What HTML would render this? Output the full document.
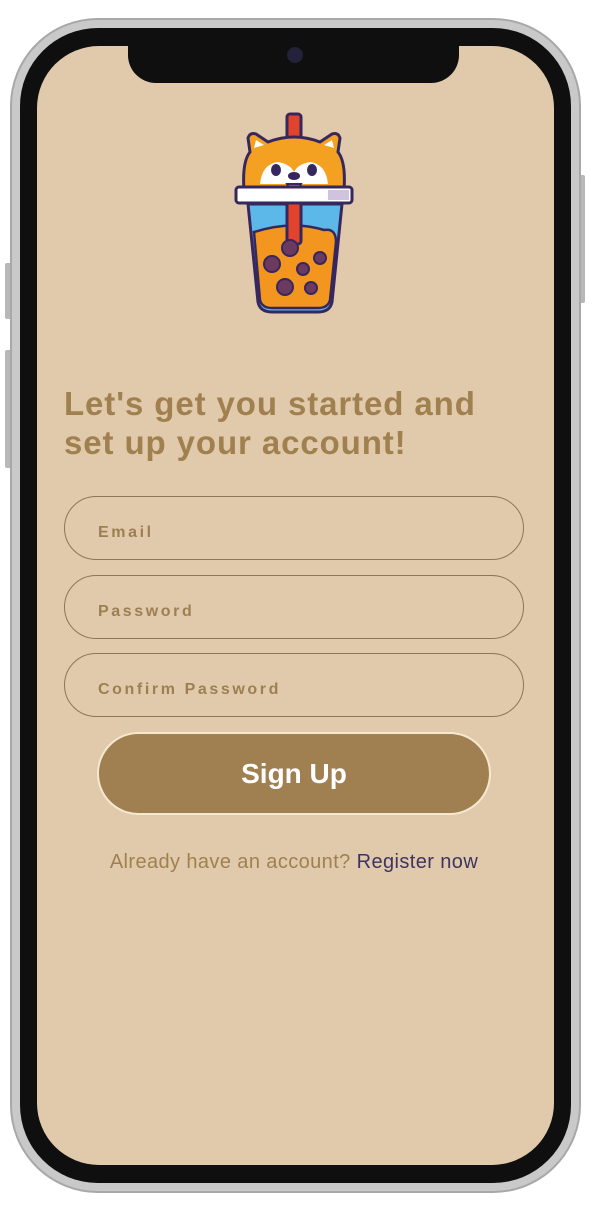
<!DOCTYPE html>
<html><head><meta charset="utf-8"><style>
*{margin:0;padding:0;box-sizing:border-box}
body{width:594px;height:1205px;background:#fff;position:relative;overflow:hidden;font-family:"Liberation Sans",sans-serif}
.btnside{position:absolute;background:#b8b8b8;border-radius:2px}
.outer{position:absolute;left:10px;top:18px;width:571px;height:1175px;border-radius:88px;background:#c9c9c9;border:2px solid #a8a8a8}
.black{position:absolute;left:20px;top:28px;width:551px;height:1155px;border-radius:78px;background:#0f0f0f}
.screen{position:absolute;left:37px;top:46px;width:517px;height:1119px;border-radius:62px;background:#e1caab;overflow:hidden}
.notch{position:absolute;left:91px;top:-2px;width:331px;height:39px;background:#0f0f0f;border-radius:0 0 28px 28px}
.cam{position:absolute;width:16px;height:16px;border-radius:50%;background:#22223a}
h1{position:absolute;left:64px;top:384px;font-size:33px;line-height:39px;color:#a0804f;font-weight:bold;letter-spacing:0.9px;white-space:nowrap}
.in{position:absolute;left:64px;width:460px;height:64px;border:1.5px solid #8c7659;border-radius:32px;font-size:16px;font-weight:bold;letter-spacing:2.6px;color:#9d7f52;padding-left:33px;padding-top:5px;line-height:61px}
.su{position:absolute;left:97px;top:732px;width:394px;height:83px;background:#a07f50;border:2px solid #f5e8cf;border-radius:42px;color:#fff;font-size:28px;font-weight:bold;text-align:center;line-height:79px}
.ft{position:absolute;left:0;width:588px;top:851px;text-align:center;font-size:20px;letter-spacing:.4px;color:#a0804f}
.ft span{color:#3d3560}
</style></head><body>
<div class="btnside" style="left:5px;top:263px;width:7px;height:56px"></div>
<div class="btnside" style="left:5px;top:350px;width:7px;height:118px"></div>
<div class="btnside" style="left:578px;top:175px;width:7px;height:128px"></div>
<div class="outer"></div>
<div class="black"></div>
<div class="screen"><div class="notch"></div></div>
<div class="cam" style="left:287px;top:47px"></div>
<svg style="position:absolute;left:232px;top:112px" width="124" height="204" viewBox="0 0 124 204">
<path d="M16 92 L26 190 Q28 200 40 200 L86 200 Q98 200 100 190 L110 92 Z" fill="#5bb8e8" stroke="#36275e" stroke-width="3"/>
<path d="M22 120 Q60 108 92 118 Q104 116 104 130 L98 188 Q96 196 86 196 L40 196 Q30 196 28 188 Z" fill="#f3961f" stroke="#36275e" stroke-width="2.5"/>
<rect x="55" y="2" width="14" height="130" rx="3" fill="#e2432c" stroke="#36275e" stroke-width="3"/>
<path d="M12 78 Q10 50 18 40 L16 26 Q18 20 24 22 L36 30 Q62 20 88 30 L100 22 Q106 20 108 26 L106 40 Q114 50 112 78 Z" fill="#f4a021" stroke="#36275e" stroke-width="3"/>
<path d="M22 36 L24 28 L32 33 Z M102 36 L100 28 L92 33 Z" fill="#fff"/>
<path d="M28 72 Q30 52 46 50 Q58 52 62 60 Q66 52 78 50 Q94 52 96 72 Z" fill="#fff"/>
<ellipse cx="44" cy="58" rx="5" ry="6" fill="#36275e"/><ellipse cx="80" cy="58" rx="5" ry="6" fill="#36275e"/>
<ellipse cx="62" cy="64" rx="6" ry="4" fill="#36275e"/>
<path d="M55 72 Q62 86 69 72 Z" fill="#e86b7a" stroke="#36275e" stroke-width="2"/>
<rect x="4" y="75" width="116" height="16" rx="3" fill="#fff" stroke="#36275e" stroke-width="3"/>
<rect x="96" y="78" width="21" height="10" fill="#cfc3df"/>
<circle cx="58" cy="136" r="8" fill="#6b3a5e" stroke="#36275e" stroke-width="2"/>
<circle cx="40" cy="152" r="8" fill="#6b3a5e" stroke="#36275e" stroke-width="2"/>
<circle cx="88" cy="146" r="6" fill="#6b3a5e" stroke="#36275e" stroke-width="2"/>
<circle cx="71" cy="157" r="6" fill="#6b3a5e" stroke="#36275e" stroke-width="2"/>
<circle cx="53" cy="175" r="8" fill="#6b3a5e" stroke="#36275e" stroke-width="2"/>
<circle cx="79" cy="176" r="6" fill="#6b3a5e" stroke="#36275e" stroke-width="2"/>
</svg>
<h1>Let's get you started and<br>set up your account!</h1>
<div class="in" style="top:496px">Email</div>
<div class="in" style="top:575px">Password</div>
<div class="in" style="top:653px">Confirm Password</div>
<div class="su">Sign Up</div>
<div class="ft">Already have an account? <span>Register now</span></div>
</body></html>
